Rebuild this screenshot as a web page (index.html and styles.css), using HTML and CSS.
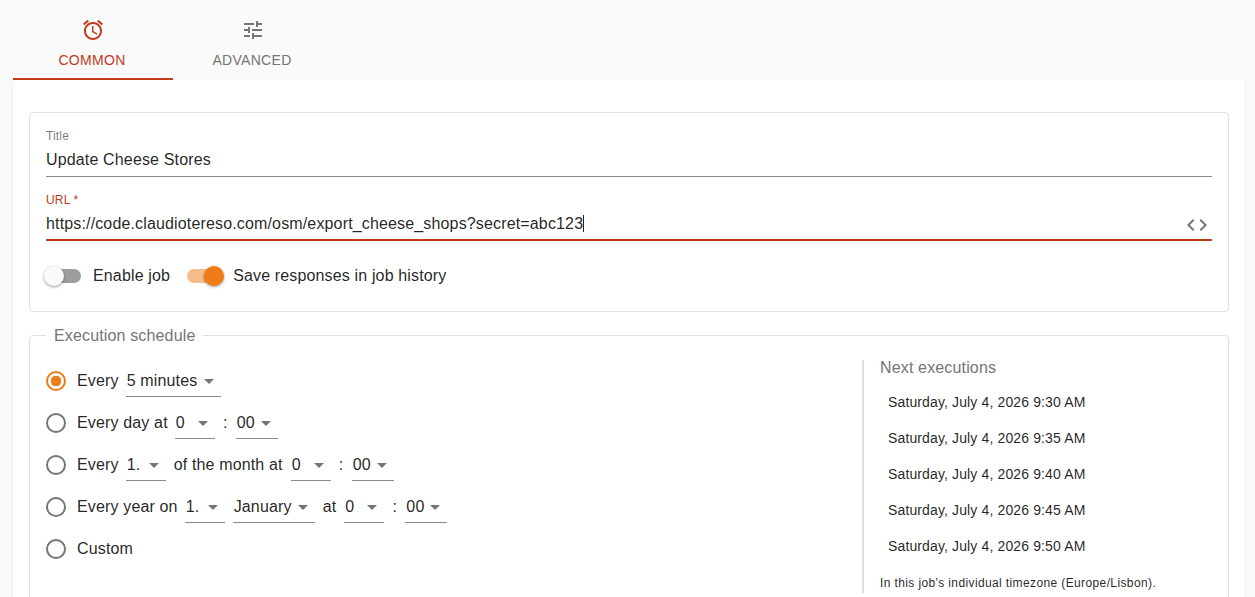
FILE: index.html
```html
<!DOCTYPE html>
<html>
<head>
  <title>Edit Cron Job</title>
  <link rel="stylesheet" href="styles.css">
</head>
<body>
  <div class="tabs">
    <div class="tab tab-active">
      <svg class="tab-icon" viewBox="0 0 24 24"><path d="M22 5.72l-4.6-3.86-1.29 1.53 4.6 3.86L22 5.72zM7.88 3.39L6.6 1.86 2 5.71l1.29 1.53 4.59-3.85zM12.5 8H11v6l4.75 2.85.75-1.23-4-2.37V8zM12 4c-4.97 0-9 4.03-9 9s4.03 9 9 9 9-4.03 9-9-4.03-9-9-9zm0 16c-3.87 0-7-3.13-7-7s3.13-7 7-7 7 3.13 7 7-3.13 7-7 7z"/></svg>
      <span class="tab-text">COMMON</span>
    </div>
    <div class="tab">
      <svg class="tab-icon" viewBox="0 0 24 24"><path d="M3 17v2h6v-2H3zM3 5v2h10V5H3zm10 16v-2h8v-2h-8v-2h-2v6h2zM7 9v2H3v2h4v2h2V9H7zm14 4v-2H11v2h10zm-6-4h2V7h4V5h-4V3h-2v6z"/></svg>
      <span class="tab-text">ADVANCED</span>
    </div>
  </div>

  <div class="paper">
    <fieldset class="box box-main">
      <div class="field">
        <label class="field-label">Title</label>
        <div class="field-value">Update Cheese Stores</div>
      </div>
      <div class="field field-focused">
        <label class="field-label">URL<span class="req"> *</span></label>
        <div class="field-value">
          <span>https://code.claudiotereso.com/osm/export_cheese_shops?secret=abc123<span class="caret"></span></span>
          <svg class="code-icon" viewBox="0 0 24 24"><path d="M9.4 16.6L4.8 12l4.6-4.6L8 6l-6 6 6 6 1.4-1.4zm5.2 0l4.6-4.6-4.6-4.6L16 6l6 6-6 6-1.4-1.4z"/></svg>
        </div>
      </div>
      <div class="switches">
        <div class="switch-row">
          <span class="switch"><span class="track"></span><span class="thumb"></span></span>
          <span>Enable job</span>
        </div>
        <div class="switch-row">
          <span class="switch switch-on"><span class="track"></span><span class="thumb"></span></span>
          <span>Save responses in job history</span>
        </div>
      </div>
    </fieldset>

    <fieldset class="box box-schedule">
      <legend>Execution schedule</legend>
      <div class="schedule">
        <div class="options">
          <div class="option">
            <span class="radio radio-on"></span>
            <span class="txt">Every</span>
            <span class="select w95">5 minutes</span>
          </div>
          <div class="option">
            <span class="radio"></span>
            <span class="txt">Every day at</span>
            <span class="select w40">0</span>
            <span class="colon">:</span>
            <span class="select w42">00</span>
          </div>
          <div class="option">
            <span class="radio"></span>
            <span class="txt">Every</span>
            <span class="select w40">1.</span>
            <span class="txt mid">of the month at</span>
            <span class="select w40">0</span>
            <span class="colon">:</span>
            <span class="select w42">00</span>
          </div>
          <div class="option">
            <span class="radio"></span>
            <span class="txt">Every year on</span>
            <span class="select w40">1.</span>
            <span class="select w82 tight">January</span>
            <span class="txt mid">at</span>
            <span class="select w40">0</span>
            <span class="colon">:</span>
            <span class="select w42">00</span>
          </div>
          <div class="option">
            <span class="radio"></span>
            <span class="txt">Custom</span>
          </div>
        </div>
        <div class="next">
          <h3>Next executions</h3>
          <ul>
            <li>Saturday, July 4, 2026 9:30 AM</li>
            <li>Saturday, July 4, 2026 9:35 AM</li>
            <li>Saturday, July 4, 2026 9:40 AM</li>
            <li>Saturday, July 4, 2026 9:45 AM</li>
            <li>Saturday, July 4, 2026 9:50 AM</li>
          </ul>
          <p>In this job's individual timezone (Europe/Lisbon).</p>
        </div>
      </div>
    </fieldset>
  </div>
</body>
</html>
```

FILE: styles.css
```css
html, body {
  height: 597px;
  overflow: hidden;
}

body {
  margin: 0;
  padding: 0 10px 0 13px;
  background-color: #fafafa;
  font-family: "Liberation Sans", Arial, sans-serif;
  font-size: 16px;
  letter-spacing: 0.15px;
  color: rgba(0, 0, 0, 0.87);
}

/* Tabs */
.tabs {
  display: flex;
  height: 80px;
}

.tab {
  width: 160px;
  box-sizing: border-box;
  padding-top: 18px;
  display: flex;
  flex-direction: column;
  align-items: center;
  font-size: 14px;
  letter-spacing: 0.3px;
  color: #757575;
}

.tab-icon {
  width: 24px;
  height: 24px;
  fill: #757575;
  margin-bottom: 10px;
}

.tab-text {
  margin-right: 2px;
}

.tab-active {
  color: #c2391b;
  border-bottom: 2px solid #c2391b;
}

.tab-active .tab-icon {
  fill: #c2391b;
}

/* Card */
.paper {
  height: 517px;
  box-sizing: border-box;
  overflow: hidden;
  background-color: #fff;
  border-radius: 4px 4px 0 0;
  padding: 32px 16px 0;
  box-shadow: 0 1px 3px rgba(0, 0, 0, 0.1);
}

.box {
  margin: 0;
  min-width: 0;
  border: 1px solid #e0e0e0;
  border-radius: 4px;
}

.box-main {
  height: 200px;
  box-sizing: border-box;
  padding: 16px 16px 0;
}

.box-schedule {
  margin-top: 13px;
  padding: 0 16px 16px;
}

.box-schedule legend {
  margin-left: 0;
  padding: 2px 8px 0;
  color: #757575;
  line-height: 18px;
}

/* Text fields */
.field {
  height: 48px;
  margin-bottom: 16px;
  border-bottom: 1px solid #8a8a8a;
  box-sizing: border-box;
}

.field-label {
  display: block;
  font-size: 12px;
  line-height: 14px;
  color: rgba(0, 0, 0, 0.54);
}

.field-value {
  display: flex;
  justify-content: space-between;
  align-items: center;
  height: 33px;
  line-height: 33px;
}

.field-focused {
  border-bottom: 2px solid #c2391b;
}

.field-focused .field-label {
  color: #c2391b;
}

.req {
  font-size: 12px;
}

.caret {
  display: inline-block;
  width: 1px;
  height: 17px;
  background-color: #222;
  vertical-align: -3px;
}

.code-icon {
  width: 24px;
  height: 24px;
  fill: #757575;
  margin: 2px 3px 0 0;
}

/* Switches */
.switches {
  display: flex;
  gap: 17px;
}

.switch-row {
  display: flex;
  align-items: center;
  gap: 12px;
  height: 38px;
}

.switch {
  position: relative;
  display: block;
  width: 35px;
  height: 20px;
}

.track {
  position: absolute;
  left: 0;
  right: 0;
  top: 3px;
  height: 14px;
  border-radius: 7px;
  background-color: #9e9e9e;
}

.thumb {
  position: absolute;
  left: -2px;
  top: 0;
  width: 20px;
  height: 20px;
  border-radius: 50%;
  background-color: #fafafa;
  box-shadow: 0 1px 3px rgba(0, 0, 0, 0.4);
}

.switch-on {
  margin-right: -1px;
}

.switch-on .track {
  background-color: #f6bd8a;
}

.switch-on .thumb {
  left: 17px;
  background-color: #ef7d17;
}

/* Schedule */
.schedule {
  display: flex;
}

.options {
  width: 816px;
  padding-top: 15px;
}

.option {
  display: flex;
  align-items: center;
  height: 42px;
}

.radio {
  width: 20px;
  height: 20px;
  box-sizing: border-box;
  border: 2px solid #757575;
  border-radius: 50%;
  margin-right: 11px;
  flex-shrink: 0;
}

.radio-on {
  border-color: #ef7d17;
  background: radial-gradient(circle, #ef7d17 0, #ef7d17 5px, transparent 5.5px);
}

.txt {
  margin-right: 7px;
}

.mid {
  margin-left: 8px;
  margin-right: 8px;
}

.colon {
  width: 21px;
  text-align: center;
}

.select {
  position: relative;
  box-sizing: border-box;
  height: 32px;
  line-height: 32px;
  padding-left: 1px;
  border-bottom: 1px solid #8a8a8a;
}

.select::after {
  content: "";
  position: absolute;
  right: 7px;
  top: 14px;
  border-left: 5px solid transparent;
  border-right: 5px solid transparent;
  border-top: 5px solid #757575;
}

.tight {
  margin-left: 8px;
}

.w40 { width: 40px; }
.w42 { width: 42px; }
.w82 { width: 82px; }
.w95 { width: 95px; }

.next {
  flex: 1;
  border-left: 2px solid #e0e0e0;
  padding-left: 16px;
  height: 233px;
  margin-top: 15px;
}

.next h3 {
  margin: 0;
  font-size: 16px;
  font-weight: normal;
  line-height: 16px;
  color: #757575;
}

.next ul {
  list-style: none;
  margin: 8px 0 0;
  padding: 0 0 0 8px;
}

.next li {
  height: 36px;
  line-height: 36px;
  font-size: 14px;
  letter-spacing: 0.13px;
}

.next p {
  margin: 11px 0 0;
  font-size: 12px;
  line-height: 16px;
  letter-spacing: 0.38px;
}
```
